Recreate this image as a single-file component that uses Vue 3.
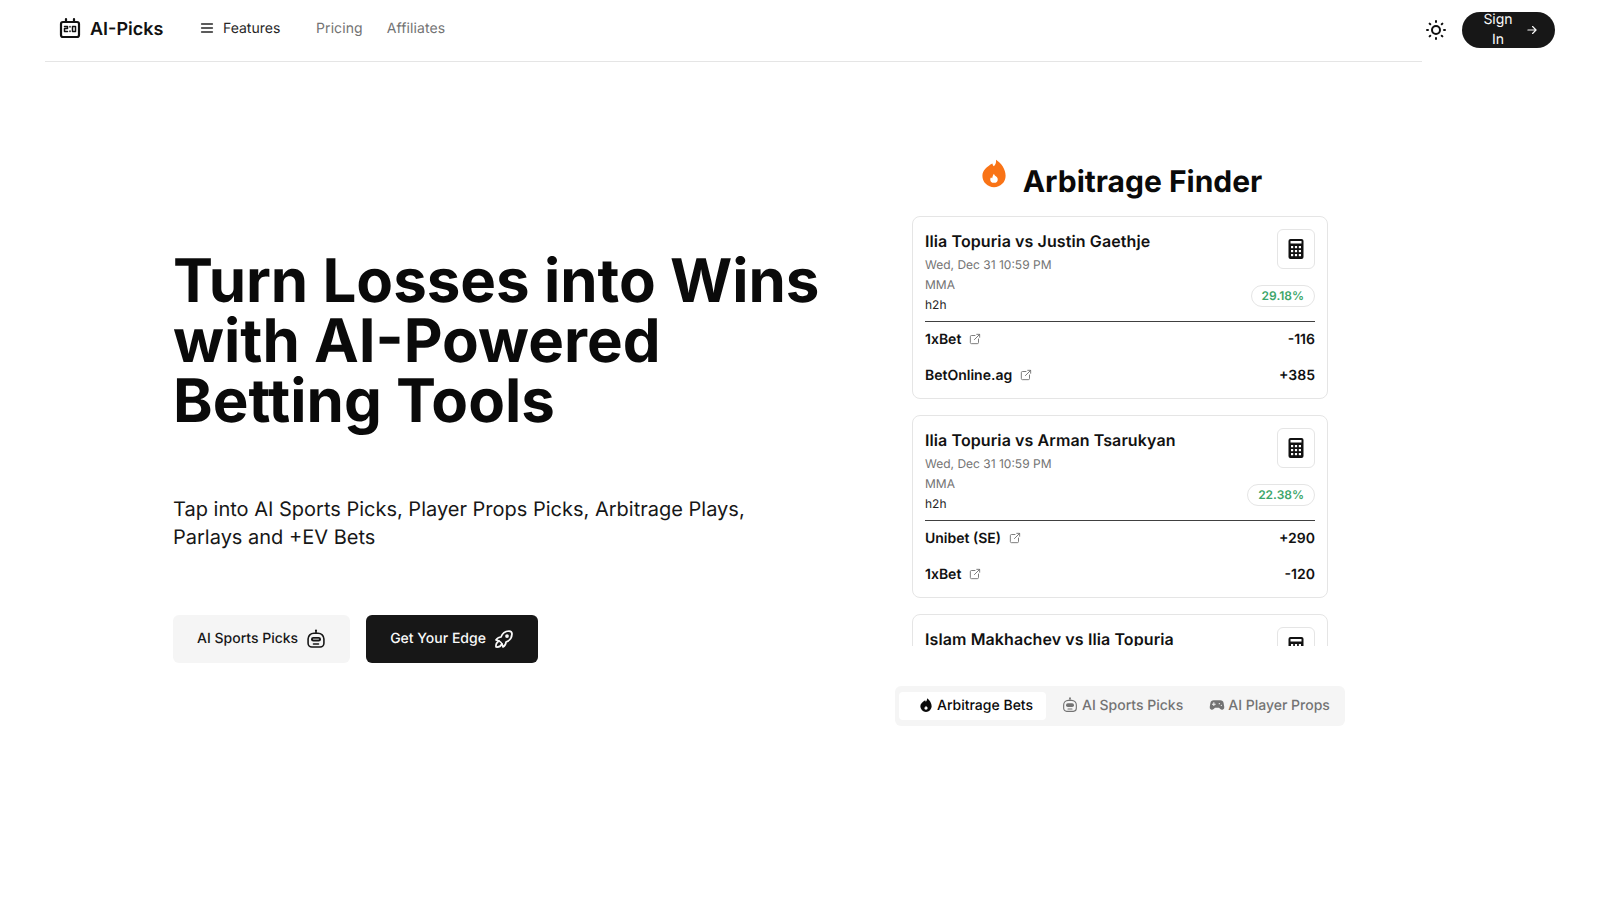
<script setup>
const bets = [
  {
    title: 'Ilia Topuria vs Justin Gaethje',
    date: 'Wed, Dec 31 10:59 PM',
    sport: 'MMA',
    market: 'h2h',
    profit: '29.18%',
    books: [
      { name: '1xBet', odds: '-116' },
      { name: 'BetOnline.ag', odds: '+385' }
    ]
  },
  {
    title: 'Ilia Topuria vs Arman Tsarukyan',
    date: 'Wed, Dec 31 10:59 PM',
    sport: 'MMA',
    market: 'h2h',
    profit: '22.38%',
    books: [
      { name: 'Unibet (SE)', odds: '+290' },
      { name: '1xBet', odds: '-120' }
    ]
  },
  {
    title: 'Islam Makhachev vs Ilia Topuria',
    date: 'Wed, Dec 31 10:59 PM',
    sport: 'MMA',
    market: 'h2h',
    profit: '18.02%',
    books: [
      { name: '1xBet', odds: '-110' },
      { name: 'BetOnline.ag', odds: '+300' }
    ]
  }
]
</script>

<template>
  <div class="page">
    <header class="topbar">
      <nav class="nav">
        <a class="logo">
          <svg width="24" height="24" viewBox="0 0 24 24" fill="none" stroke="currentColor" stroke-width="2.200" stroke-linecap="round" stroke-linejoin="round">
            <rect x="3" y="6" width="18" height="15" rx="2" />
            <path d="M8 3v3M16 3v3" />
            <path d="M6.500 10.500h3v2h-3v3h3M14.500 10.500h3v5h-3zM12 10.500v.5M12 15v.5" stroke-width="1.500" />
          </svg>
          <span>AI-Picks</span>
        </a>
        <a class="nav-link features">
          <svg width="16" height="16" viewBox="0 0 24 24" fill="none" stroke="currentColor" stroke-width="2.400" stroke-linecap="round">
            <path d="M4 6h16M4 12h16M4 18h16" />
          </svg>
          Features
        </a>
        <a class="nav-link muted pricing">Pricing</a>
        <a class="nav-link muted">Affiliates</a>
      </nav>
      <div class="actions">
        <svg width="24" height="24" viewBox="0 0 24 24" fill="none" stroke="#111" stroke-width="2" stroke-linecap="round" stroke-linejoin="round">
          <circle cx="12" cy="12" r="4" />
          <path d="M3 12h1M20 12h1M12 3v1M12 20v1M5.600 5.600l.7.7M17.700 17.700l.7.7M5.600 18.400l.7-.7M17.700 6.300l.7-.7" />
        </svg>
        <a class="signin">
          <span class="signin-text">Sign In</span>
          <svg width="14" height="14" viewBox="0 0 24 24" fill="none" stroke="currentColor" stroke-width="2" stroke-linecap="round" stroke-linejoin="round">
            <path d="M5 12h14M13 6l6 6-6 6" />
          </svg>
        </a>
      </div>
    </header>

    <main class="hero">
      <section class="intro">
        <h1>Turn Losses into Wins with AI-Powered Betting Tools</h1>
        <p>Tap into AI Sports Picks, Player Props Picks, Arbitrage Plays, Parlays and +EV Bets</p>
        <div class="cta">
          <a class="btn light">
            <span>AI Sports Picks</span>
            <svg width="20" height="20" viewBox="0 0 24 24" fill="none" stroke="currentColor" stroke-width="1.900" stroke-linecap="round" stroke-linejoin="round">
              <circle cx="12" cy="1.800" r="1.300" fill="currentColor" stroke="none" />
              <path d="M12 2.500v2.500" />
              <path d="M9.500 5h5a7 7 0 0 1 7 7v5a4.500 4.500 0 0 1-4.500 4.500H7A4.500 4.500 0 0 1 2.500 17v-5a7 7 0 0 1 7-7z" />
              <rect x="6" y="9.500" width="12" height="5.500" rx="2.700" fill="currentColor" stroke="none" />
              <path d="M9 12.200h6" stroke="#f5f5f5" stroke-width="1" />
              <path d="M9 18h6" />
            </svg>
          </a>
          <a class="btn dark">
            <span>Get Your Edge</span>
            <svg width="24" height="24" viewBox="0 0 24 24" fill="none" stroke="currentColor" stroke-width="1.750" stroke-linecap="round" stroke-linejoin="round">
              <path d="M4 13a8 8 0 0 1 7 7a6 6 0 0 0 3-5a9 9 0 0 0 6-8a3 3 0 0 0-3-3a9 9 0 0 0-8 6a6 6 0 0 0-5 3" />
              <path d="M7 14a6 6 0 0 0-3 6a6 6 0 0 0 6-3" />
              <circle cx="15" cy="9" r="1" />
            </svg>
          </a>
        </div>
      </section>

      <section class="finder">
        <h2>
          <svg class="flame" width="32" height="32" viewBox="0 0 24 24" fill="#f97316">
            <path fill-rule="evenodd" d="M13.500 2c.3 2.400-.5 3.800-1.700 5-.6-.6-.9-1.300-1-2.100C6.800 7 3.300 10.300 3.300 14a8.700 8.700 0 0 0 17.400 0c0-4.800-3.200-9.500-7.200-12zM12 12.500c.2 1.100 1 1.600 1.600 2.100.7.600 1.200 1.200 1.200 2a2.800 2.800 0 0 1-5.600 0c0-.6.200-1.100.6-1.500.2.400.5.700.9.800.1-1.200.5-2.400 1.300-3.400z" />
          </svg>
          Arbitrage Finder
        </h2>

        <div class="list">
          <article v-for="bet in bets" :key="bet.title" class="card">
            <div class="card-head">
              <div>
                <h3>{{ bet.title }}</h3>
                <div class="meta">{{ bet.date }}</div>
                <div class="meta sport">{{ bet.sport }}</div>
                <div class="market">{{ bet.market }}</div>
              </div>
              <div class="card-side">
                <button class="calc">
                  <svg width="24" height="24" viewBox="0 0 24 24">
                    <rect x="4.500" y="2" width="15" height="20" rx="2" fill="#111" />
                    <rect x="6.500" y="4" width="11" height="2.500" fill="#fff" />
                    <g fill="#fff">
                      <rect x="7" y="9" width="2.200" height="2.200" /><rect x="10.900" y="9" width="2.200" height="2.200" /><rect x="14.800" y="9" width="2.200" height="2.200" />
                      <rect x="7" y="13" width="2.200" height="2.200" /><rect x="10.900" y="13" width="2.200" height="2.200" /><rect x="14.800" y="13" width="2.200" height="2.200" />
                      <rect x="7" y="17" width="2.200" height="2.200" /><rect x="10.900" y="17" width="2.200" height="2.200" /><rect x="14.800" y="17" width="2.200" height="2.200" />
                    </g>
                  </svg>
                </button>
                <span class="profit">{{ bet.profit }}</span>
              </div>
            </div>
            <div v-for="book in bet.books" :key="book.name" class="book">
              <span class="book-name">
                {{ book.name }}
                <svg width="14" height="14" viewBox="0 0 24 24" fill="none" stroke="#737373" stroke-width="1.600" stroke-linecap="round" stroke-linejoin="round">
                  <path d="M12 6H6a2 2 0 0 0-2 2v10a2 2 0 0 0 2 2h10a2 2 0 0 0 2-2v-6" />
                  <path d="M11 13l9-9M15 4h5v5" />
                </svg>
              </span>
              <span class="odds">{{ book.odds }}</span>
            </div>
          </article>
        </div>

        <div class="tabs">
          <a class="tab active">
            <svg width="16" height="16" viewBox="0 0 24 24" fill="currentColor">
              <path fill-rule="evenodd" d="M13.500 2c.3 2.400-.5 3.800-1.700 5-.6-.6-.9-1.300-1-2.100C6.800 7 3.500 10.300 3.500 14a8.500 8.500 0 0 0 17 0c0-4.800-3-9.500-7-12zM12 13c.2 1 .9 1.400 1.500 1.900.6.500 1 1 1 1.700a2.500 2.500 0 0 1-5 0c0-.5.100-.9.500-1.300.2.300.4.500.7.600.1-1 .5-2 1.300-2.900z" />
            </svg>
            Arbitrage Bets
          </a>
          <a class="tab sports">
            <svg width="16" height="16" viewBox="0 0 24 24" fill="none" stroke="currentColor" stroke-width="1.700" stroke-linecap="round" stroke-linejoin="round">
              <circle cx="12" cy="1.800" r="1.300" fill="currentColor" stroke="none" />
              <path d="M12 2.500v2.500" />
              <path d="M9.500 5h5a7 7 0 0 1 7 7v5a4.500 4.500 0 0 1-4.500 4.500H7A4.500 4.500 0 0 1 2.500 17v-5a7 7 0 0 1 7-7z" />
              <rect x="6" y="9.500" width="12" height="5.500" rx="2.700" fill="currentColor" stroke="none" />
              <path d="M9 18h6" />
            </svg>
            AI Sports Picks
          </a>
          <a class="tab">
            <svg width="16" height="16" viewBox="0 0 24 24" fill="currentColor">
              <path fill-rule="evenodd" d="M7 5h10a5 5 0 0 1 4.900 4.100l1 6a3.400 3.400 0 0 1-5.900 2.800L15 16H9l-2 1.900a3.400 3.400 0 0 1-5.900-2.800l1-6A5 5 0 0 1 7 5zM6.500 8v2H4.500v1.500h2v2H8v-2h2V10H8V8zM15.500 9a1 1 0 1 0 0 2 1 1 0 0 0 0-2zM18.500 11.500a1 1 0 1 0 0 2 1 1 0 0 0 0-2z" />
            </svg>
            AI Player Props
          </a>
        </div>
      </section>
    </main>
  </div>
</template>

<style scoped>
.page {
  width: 1600px;
  height: 900px;
  overflow: hidden;
  background: #fff;
  color: #111;
  font-family: Inter, "Liberation Sans", sans-serif;
  text-rendering: geometricPrecision;
}
a {
  text-decoration: none;
  color: inherit;
}
.topbar {
  display: flex;
  align-items: flex-start;
  height: 62px;
  padding-left: 45px;
}
.nav {
  display: flex;
  align-items: center;
  width: 1377px;
  height: 62px;
  padding-left: 13px;
  box-sizing: border-box;
  border-bottom: 1px solid #e5e5e5;
}
.logo {
  display: flex;
  align-items: center;
  gap: 8px;
  font-size: 18px;
  font-weight: 600;
  width: 141px;
  margin-top: -2px;
}
.logo svg {
  margin-bottom: 4px;
}
.nav-link {
  display: flex;
  align-items: center;
  gap: 8px;
  font-size: 14px;
  color: #404040;
  margin-top: -5px;
}
.features {
  width: 117px;
  color: #262626;
}
.muted {
  color: #737373;
  letter-spacing: 0.1px;
}
.pricing {
  margin-right: 24px;
}
.actions {
  display: flex;
  align-items: center;
  gap: 14px;
  height: 60px;
  padding-left: 2px;
}
.signin {
  display: flex;
  align-items: center;
  justify-content: space-between;
  box-sizing: border-box;
  width: 93px;
  height: 36px;
  padding: 0 16px 0 18px;
  border-radius: 18px;
  background: #171717;
  color: #fafafa;
  font-size: 14px;
}
.signin-text {
  width: 36px;
  text-align: center;
  line-height: 20px;
}
.hero {
  display: flex;
  align-items: flex-start;
}
.intro {
  box-sizing: border-box;
  width: 895px;
  padding: 189px 60px 0 173px;
}
h1 {
  margin: 0;
  font-size: 60px;
  line-height: 60px;
  font-weight: 700;
  color: #0a0a0a;
}
.intro p {
  margin: 64px 0 0;
  max-width: 600px;
  font-size: 20px;
  line-height: 28px;
  color: #171717;
}
.cta {
  display: flex;
  gap: 16px;
  margin-top: 64px;
}
.btn {
  display: flex;
  align-items: center;
  gap: 8px;
  height: 48px;
  padding: 0 24px;
  border-radius: 6px;
  font-size: 14px;
  font-weight: 500;
}
.btn span {
  margin-bottom: 2px;
}
.btn.light {
  background: #f5f5f5;
  color: #171717;
}
.btn.dark {
  gap: 6px;
  padding-right: 22px;
  background: #171717;
  color: #fafafa;
}
.finder {
  width: 450px;
  padding-top: 102px;
}
h2 {
  display: flex;
  align-items: center;
  justify-content: center;
  gap: 13px;
  margin: 0 0 16px;
  font-size: 30px;
  line-height: 36px;
  font-weight: 700;
  color: #0a0a0a;
}
.flame {
  margin-top: -18px;
}
.list {
  display: flex;
  flex-direction: column;
  gap: 16px;
  width: 416px;
  height: 430px;
  margin: 0 auto 40px;
  overflow: hidden;
}
.card {
  flex: none;
  box-sizing: border-box;
  height: 183px;
  padding: 12px;
  border: 1px solid #e5e5e5;
  border-radius: 8px;
}
.card-head {
  display: flex;
  justify-content: space-between;
  height: 92px;
  border-bottom: 1px solid #404040;
}
h3 {
  margin: 0 0 2px;
  font-size: 16px;
  line-height: 24px;
  font-weight: 600;
  letter-spacing: 0.1px;
}
.meta {
  font-size: 12px;
  line-height: 20px;
  color: #737373;
}
.market {
  font-size: 12px;
  line-height: 20px;
  color: #262626;
}
.card-side {
  display: flex;
  flex-direction: column;
  align-items: flex-end;
}
.calc {
  display: flex;
  align-items: center;
  justify-content: center;
  width: 38px;
  height: 40px;
  padding: 0;
  background: #fff;
  border: 1px solid #e5e5e5;
  border-radius: 6px;
}
.profit {
  margin-top: 16px;
  padding: 0 10px;
  height: 22px;
  box-sizing: border-box;
  border: 1px solid #e5e5e5;
  border-radius: 11px;
  font-size: 12px;
  line-height: 20px;
  font-weight: 600;
  color: #3da66b;
}
.book {
  display: flex;
  align-items: center;
  justify-content: space-between;
  box-sizing: border-box;
  height: 36px;
  padding-bottom: 2px;
  font-size: 14px;
  font-weight: 600;
}
.book-name {
  display: flex;
  align-items: center;
  gap: 7px;
}
.tabs {
  display: flex;
  align-items: center;
  gap: 3px;
  box-sizing: border-box;
  height: 40px;
  padding: 0 4px;
  border-radius: 6px;
  background: #f5f5f5;
  white-space: nowrap;
}
.tab {
  display: flex;
  align-items: center;
  gap: 3px;
  box-sizing: border-box;
  height: 28px;
  padding: 0 12px 2px;
  font-size: 14px;
  font-weight: 500;
  color: #737373;
  border-radius: 4px;
}
.tab.sports {
  gap: 4px;
  padding-left: 13px;
  padding-right: 11px;
}
.tab.active {
  padding: 0 13px 2px 19px;
  background: #fff;
  color: #0a0a0a;
}
</style>

<style>
html, body {
  background: #fff;
}
</style>
